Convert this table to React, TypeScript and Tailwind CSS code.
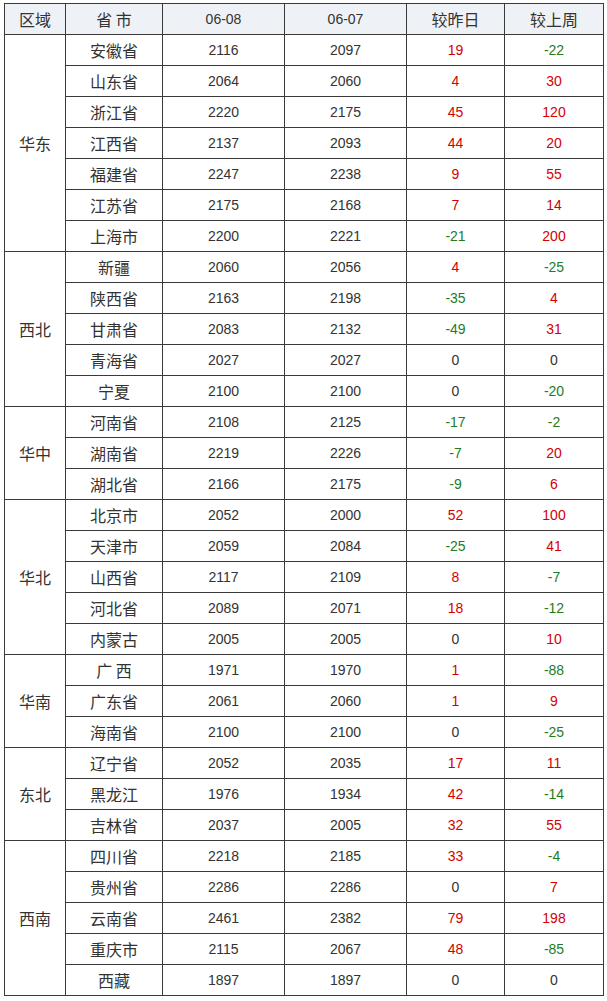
import React from "react";

type Row = [string, number, number, number, number];
const groups: [string, Row[]][] = [
  ["华东", [
    ["安徽省", 2116, 2097, 19, -22],
    ["山东省", 2064, 2060, 4, 30],
    ["浙江省", 2220, 2175, 45, 120],
    ["江西省", 2137, 2093, 44, 20],
    ["福建省", 2247, 2238, 9, 55],
    ["江苏省", 2175, 2168, 7, 14],
    ["上海市", 2200, 2221, -21, 200],
  ]],
  ["西北", [
    ["新疆", 2060, 2056, 4, -25],
    ["陕西省", 2163, 2198, -35, 4],
    ["甘肃省", 2083, 2132, -49, 31],
    ["青海省", 2027, 2027, 0, 0],
    ["宁夏", 2100, 2100, 0, -20],
  ]],
  ["华中", [
    ["河南省", 2108, 2125, -17, -2],
    ["湖南省", 2219, 2226, -7, 20],
    ["湖北省", 2166, 2175, -9, 6],
  ]],
  ["华北", [
    ["北京市", 2052, 2000, 52, 100],
    ["天津市", 2059, 2084, -25, 41],
    ["山西省", 2117, 2109, 8, -7],
    ["河北省", 2089, 2071, 18, -12],
    ["内蒙古", 2005, 2005, 0, 10],
  ]],
  ["华南", [
    ["广 西", 1971, 1970, 1, -88],
    ["广东省", 2061, 2060, 1, 9],
    ["海南省", 2100, 2100, 0, -25],
  ]],
  ["东北", [
    ["辽宁省", 2052, 2035, 17, 11],
    ["黑龙江", 1976, 1934, 42, -14],
    ["吉林省", 2037, 2005, 32, 55],
  ]],
  ["西南", [
    ["四川省", 2218, 2185, 33, -4],
    ["贵州省", 2286, 2286, 0, 7],
    ["云南省", 2461, 2382, 79, 198],
    ["重庆市", 2115, 2067, 48, -85],
    ["西藏", 1897, 1897, 0, 0],
  ]],
];

const cjkCell =
  "border border-[#3a3a3a] text-center text-[16px] font-normal whitespace-pre font-['Noto_Sans_CJK_SC',sans-serif]";
const numCell =
  "border border-[#3a3a3a] text-center text-[14px] font-normal font-['Liberation_Sans','Noto_Sans_CJK_SC',sans-serif]";

function Delta({ v }: { v: number }) {
  const color = v > 0 ? "text-[#d40000]" : v < 0 ? "text-[#1e7d1e]" : "text-[#333333]";
  return <td className={`${numCell} ${color}`}>{v}</td>;
}

export default function App() {
  return (
    <div className="bg-white w-[607px] h-[1001px] pl-[4px] pt-[3px]">
      <table className="table-fixed border-collapse w-[599px] text-[#333333]">
        <colgroup>
          <col className="w-[61px]" />
          <col className="w-[97px]" />
          <col className="w-[122px]" />
          <col className="w-[122px]" />
          <col className="w-[98px]" />
          <col className="w-[99px]" />
        </colgroup>
        <thead>
          <tr className="h-[31px] bg-[#eef2f7]">
            <th className={cjkCell}>区域</th>
            <th className={cjkCell}>省 市</th>
            <th className={numCell}>06-08</th>
            <th className={numCell}>06-07</th>
            <th className={cjkCell}>较昨日</th>
            <th className={cjkCell}>较上周</th>
          </tr>
        </thead>
        <tbody>
          {groups.map(([region, rows]) =>
            rows.map((r, i) => (
              <tr key={region + r[0]} className="h-[31px]">
                {i === 0 && (
                  <td rowSpan={rows.length} className={cjkCell}>
                    {region}
                  </td>
                )}
                <td className={cjkCell}>{r[0]}</td>
                <td className={numCell}>{r[1]}</td>
                <td className={numCell}>{r[2]}</td>
                <Delta v={r[3]} />
                <Delta v={r[4]} />
              </tr>
            ))
          )}
        </tbody>
      </table>
    </div>
  );
}
